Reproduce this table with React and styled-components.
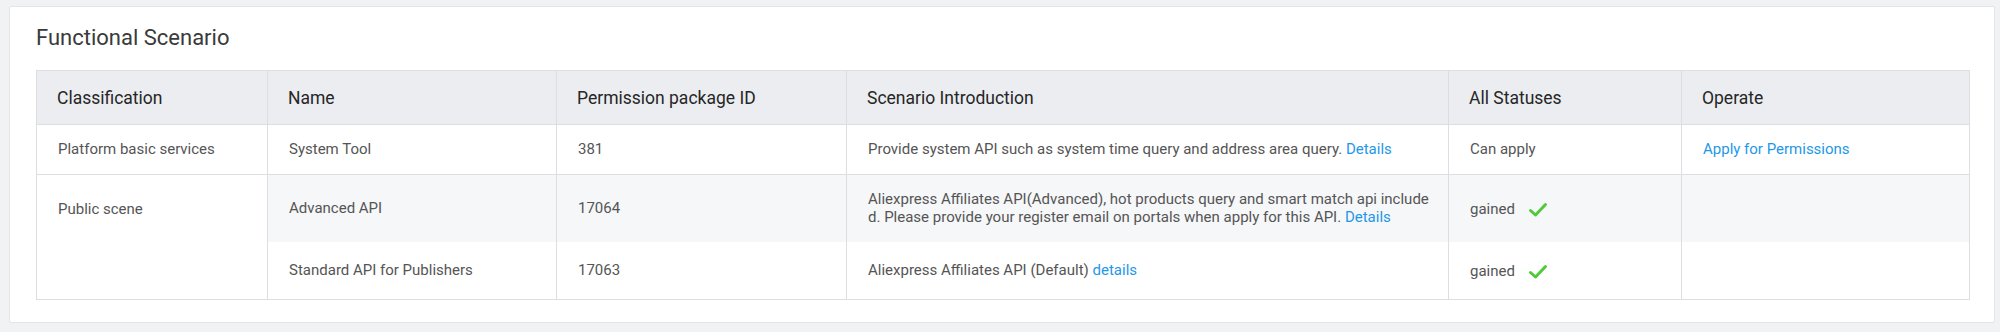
import React from 'react';
import styled, { createGlobalStyle } from 'styled-components';

const GlobalStyle = createGlobalStyle`
  html, body {
    margin: 0;
    background: #f0f2f4;
  }
  body {
    padding: 6px 5px 6px 9px;
    font-family: Roboto, "Liberation Sans", Arial, sans-serif;
  }
`;

const columns = [
  { title: 'Classification', width: 231 },
  { title: 'Name', width: 289 },
  { title: 'Permission package ID', width: 290 },
  { title: 'Scenario Introduction', width: 602 },
  { title: 'All Statuses', width: 233 },
  { title: 'Operate', width: 288 },
];

const CheckIcon = () => (
  <svg width="20" height="16" viewBox="0 0 20 16" aria-hidden="true">
    <path
      d="M2.5 8.5 L7.5 13 L17.5 2.5"
      fill="none"
      stroke="#52c93a"
      strokeWidth="3"
      strokeLinecap="round"
      strokeLinejoin="round"
    />
  </svg>
);

const Gained = () => (
  <Status>
    gained
    <CheckIcon />
  </Status>
);

const App = () => {
  return (
    <>
      <GlobalStyle />
      <Card>
        <Title>Functional Scenario</Title>
        <Table>
          <colgroup>
            {columns.map((c) => (
              <col key={c.title} style={{ width: c.width }} />
            ))}
          </colgroup>
          <thead>
            <tr>
              {columns.map((c) => (
                <Th key={c.title}>{c.title}</Th>
              ))}
            </tr>
          </thead>
          <tbody>
            <tr>
              <Td>Platform basic services</Td>
              <Td>System Tool</Td>
              <Td>381</Td>
              <Td>
                Provide system API such as system time query and address area
                query. <Link href="#">Details</Link>
              </Td>
              <Td>Can apply</Td>
              <Td>
                <Link href="#">Apply for Permissions</Link>
              </Td>
            </tr>
            <tr>
              <GroupCell rowSpan={2}>Public scene</GroupCell>
              <Td $shaded>Advanced API</Td>
              <Td $shaded>17064</Td>
              <Td $shaded $breakAll>
                Aliexpress Affiliates API(Advanced), hot products query and
                smart match api included. Please provide your register email
                on portals when apply for this API. <Link href="#">Details</Link>
              </Td>
              <Td $shaded>
                <Gained />
              </Td>
              <Td $shaded />
            </tr>
            <tr>
              <Td>Standard API for Publishers</Td>
              <Td>17063</Td>
              <Td>
                Aliexpress Affiliates API (Default) <Link href="#">details</Link>
              </Td>
              <Td>
                <Gained />
              </Td>
              <Td />
            </tr>
          </tbody>
        </Table>
      </Card>
    </>
  );
};

export default App;

const Card = styled.section`
  background: #fff;
  border: 1px solid #e3e5e8;
  border-radius: 2px;
  padding: 13px 25px 22px 26px;
`;

const Title = styled.h2`
  margin: 0 0 14px;
  font-size: 22px;
  font-weight: 400;
  line-height: 36px;
  color: #3a3a3a;
`;

const Table = styled.table`
  width: 100%;
  table-layout: fixed;
  border-collapse: collapse;
  border: 1px solid #dcdee2;
`;

const Th = styled.th`
  background: #ebedf0;
  border: 1px solid #dcdee2;
  padding: 0 20px;
  height: 53px;
  text-align: left;
  font-size: 17.5px;
  font-weight: 400;
  color: #262626;
`;

const Td = styled.td`
  border-left: 1px solid #dcdee2;
  border-right: 1px solid #dcdee2;
  border-top: ${({ $shaded }) => ($shaded ? '1px solid #dcdee2' : '0')};
  border-bottom: ${({ $shaded }) => ($shaded ? '0' : '1px solid #dcdee2')};
  background: ${({ $shaded }) => ($shaded ? '#f6f7f9' : '#fff')};
  padding: 15px 12px 15px 21px;
  font-size: 15px;
  line-height: 18.5px;
  color: #555;
  vertical-align: middle;
  word-break: ${({ $breakAll }) => ($breakAll ? 'break-all' : 'normal')};
`;

const GroupCell = styled(Td)`
  vertical-align: top;
  padding-top: 25px;
  border-bottom: 1px solid #dcdee2;
`;

const Link = styled.a`
  color: #1e98e8;
  text-decoration: none;
`;

const Status = styled.span`
  display: inline-flex;
  align-items: center;
  gap: 13px;
  height: 24px;
  padding-top: 3px;
`;
